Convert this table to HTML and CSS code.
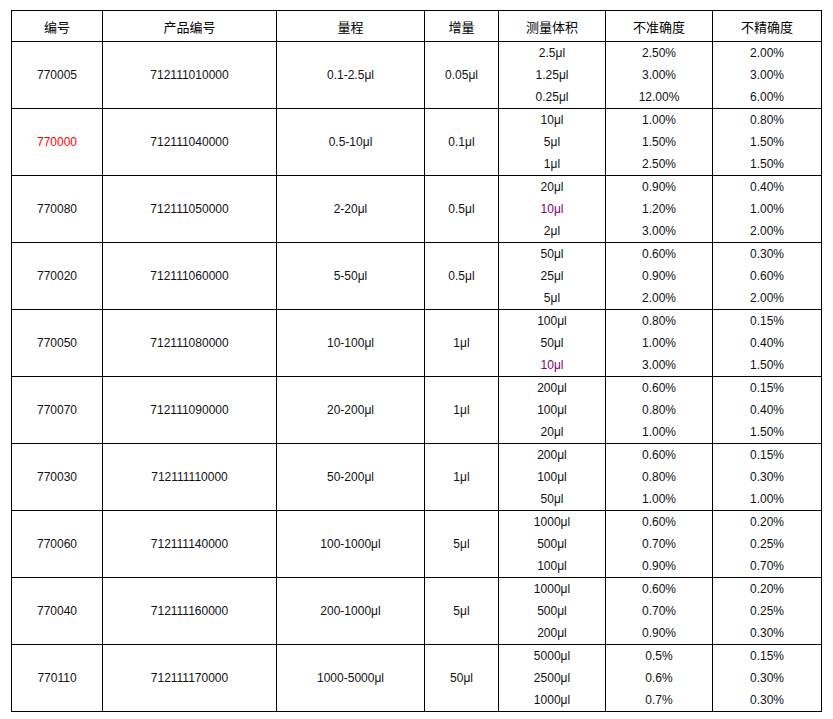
FILE: index.html
```html
<!DOCTYPE html>
<html lang="zh">
<head>
<meta charset="utf-8">
<title>移液器规格</title>
<link rel="stylesheet" href="styles.css">
</head>
<body>
<table class="spec">
<colgroup>
<col class="c1"><col class="c2"><col class="c3"><col class="c4"><col class="c5"><col class="c6"><col class="c7">
</colgroup>
<thead>
<tr><th>编号</th><th>产品编号</th><th>量程</th><th>增量</th><th>测量体积</th><th>不准确度</th><th>不精确度</th></tr>
</thead>
<tbody>
<tr><td>770005</td><td>712111010000</td><td>0.1-2.5μl</td><td>0.05μl</td>
<td class="m"><div>2.5μl</div><div>1.25μl</div><div>0.25μl</div></td>
<td class="m"><div>2.50%</div><div>3.00%</div><div>12.00%</div></td>
<td class="m"><div>2.00%</div><div>3.00%</div><div>6.00%</div></td></tr>
<tr><td class="red">770000</td><td>712111040000</td><td>0.5-10μl</td><td>0.1μl</td>
<td class="m"><div>10μl</div><div>5μl</div><div>1μl</div></td>
<td class="m"><div>1.00%</div><div>1.50%</div><div>2.50%</div></td>
<td class="m"><div>0.80%</div><div>1.50%</div><div>1.50%</div></td></tr>
<tr><td>770080</td><td>712111050000</td><td>2-20μl</td><td>0.5μl</td>
<td class="m"><div>20μl</div><div class="purple">10μl</div><div>2μl</div></td>
<td class="m"><div>0.90%</div><div>1.20%</div><div>3.00%</div></td>
<td class="m"><div>0.40%</div><div>1.00%</div><div>2.00%</div></td></tr>
<tr><td>770020</td><td>712111060000</td><td>5-50μl</td><td>0.5μl</td>
<td class="m"><div>50μl</div><div>25μl</div><div>5μl</div></td>
<td class="m"><div>0.60%</div><div>0.90%</div><div>2.00%</div></td>
<td class="m"><div>0.30%</div><div>0.60%</div><div>2.00%</div></td></tr>
<tr><td>770050</td><td>712111080000</td><td>10-100μl</td><td>1μl</td>
<td class="m"><div>100μl</div><div>50μl</div><div class="purple">10μl</div></td>
<td class="m"><div>0.80%</div><div>1.00%</div><div>3.00%</div></td>
<td class="m"><div>0.15%</div><div>0.40%</div><div>1.50%</div></td></tr>
<tr><td>770070</td><td>712111090000</td><td>20-200μl</td><td>1μl</td>
<td class="m"><div>200μl</div><div>100μl</div><div>20μl</div></td>
<td class="m"><div>0.60%</div><div>0.80%</div><div>1.00%</div></td>
<td class="m"><div>0.15%</div><div>0.40%</div><div>1.50%</div></td></tr>
<tr><td>770030</td><td>712111110000</td><td>50-200μl</td><td>1μl</td>
<td class="m"><div>200μl</div><div>100μl</div><div>50μl</div></td>
<td class="m"><div>0.60%</div><div>0.80%</div><div>1.00%</div></td>
<td class="m"><div>0.15%</div><div>0.30%</div><div>1.00%</div></td></tr>
<tr><td>770060</td><td>712111140000</td><td>100-1000μl</td><td>5μl</td>
<td class="m"><div>1000μl</div><div>500μl</div><div>100μl</div></td>
<td class="m"><div>0.60%</div><div>0.70%</div><div>0.90%</div></td>
<td class="m"><div>0.20%</div><div>0.25%</div><div>0.70%</div></td></tr>
<tr><td>770040</td><td>712111160000</td><td>200-1000μl</td><td>5μl</td>
<td class="m"><div>1000μl</div><div>500μl</div><div>200μl</div></td>
<td class="m"><div>0.60%</div><div>0.70%</div><div>0.90%</div></td>
<td class="m"><div>0.20%</div><div>0.25%</div><div>0.30%</div></td></tr>
<tr><td>770110</td><td>712111170000</td><td>1000-5000μl</td><td>50μl</td>
<td class="m"><div>5000μl</div><div>2500μl</div><div>1000μl</div></td>
<td class="m"><div>0.5%</div><div>0.6%</div><div>0.7%</div></td>
<td class="m"><div>0.15%</div><div>0.30%</div><div>0.30%</div></td></tr>
</tbody>
</table>
</body>
</html>
```
FILE: styles.css
```css
html, body {
  margin: 0;
  padding: 0;
  background: #fff;
}
body {
  padding: 10px 0 0 11px;
  font-family: "Liberation Sans", Arial, "Noto Sans CJK SC", sans-serif;
  font-size: 12px;
  color: #111;
}
.spec {
  border-collapse: collapse;
  table-layout: fixed;
  width: 810px;
}
.c1 { width: 91px; }
.c2 { width: 174px; }
.c3 { width: 148px; }
.c4 { width: 74px; }
.c5 { width: 107px; }
.c6 { width: 107px; }
.c7 { width: 109px; }
.spec th, .spec td {
  border: 1px solid #000;
  padding: 0;
  text-align: center;
  vertical-align: middle;
}
.spec th {
  height: 30px;
  font-weight: normal;
  font-size: 13px;
  color: #000;
}
.spec td {
  height: 66px;
}
.spec td.m div {
  height: 22px;
  line-height: 22px;
}
.red { color: #ff0000; }
.purple { color: #800080; }
```
